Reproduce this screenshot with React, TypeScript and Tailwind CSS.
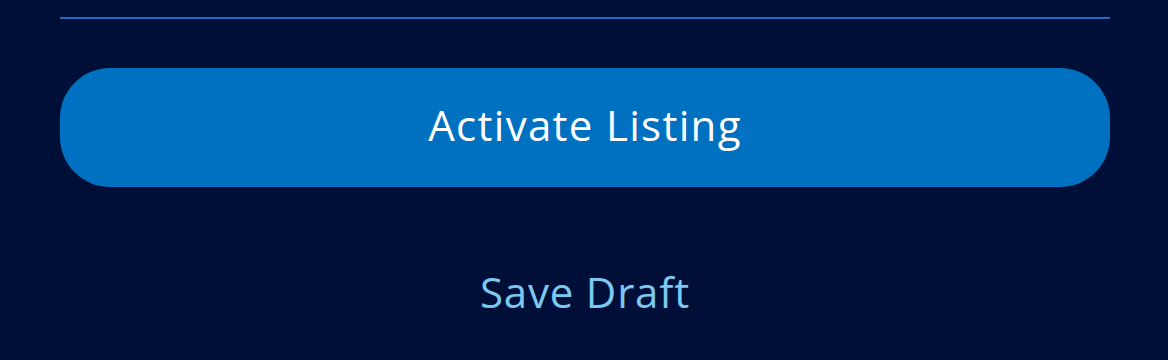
export default function App() {
  return (
    <div className="w-[1168px] h-[360px] bg-[#000f38] pl-[60px] pr-[58px] pt-[17px] flex flex-col" style={{ fontFamily: "'Open Sans', Lato, sans-serif" }}>
      <div className="h-[2px] bg-[#1f6dc2]" />
      <button className="mt-[49px] h-[119px] w-full rounded-[50px] bg-[#0070c0] pb-[5px] text-white text-[42px] leading-none tracking-[1.3px] font-medium">
        Activate Listing
      </button>
      <button className="mt-[84px] self-center text-[#7cc8ee] text-[42px] leading-none tracking-[0.8px]">
        Save Draft
      </button>
    </div>
  );
}
